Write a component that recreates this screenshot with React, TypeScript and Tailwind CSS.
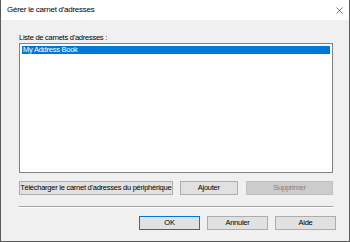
import { X } from 'lucide-react'

const font = { fontFamily: '"Liberation Sans", Arial, sans-serif' }

function Btn({ label, w, disabled, focused }: { label: string; w: string; disabled?: boolean; focused?: boolean }) {
  return (
    <div
      className={`${w} h-[14px] box-border flex items-center justify-center whitespace-nowrap text-[7.5px] tracking-[-0.25px] leading-none border ${
        disabled
          ? 'bg-[#cccccc] border-[#bfbfbf] text-[#838383]'
          : focused
            ? 'bg-[#e1e1e1] border-[#0078d7] text-black'
            : 'bg-[#e1e1e1] border-[#adadad] text-black'
      }`}
    >
      {label}
    </div>
  )
}

export default function App() {
  return (
    <div className="w-[350px] h-[242px] box-border flex flex-col bg-[#f0f0f0] border border-t-0 border-[#5a5a5a] overflow-hidden" style={font}>
      <div className="h-[20px] bg-white flex items-center justify-between pl-[6px] pr-[4px]">
        <span className="text-[8px] tracking-[-0.25px] text-black">Gérer le carnet d'adresses</span>
        <X className="w-[11px] h-[11px] text-[#222]" strokeWidth={1.3} />
      </div>
      <div className="flex flex-col pl-[18px] pr-[16px] pt-[12px]">
        <div className="text-[7.5px] tracking-[-0.25px] leading-[11px] text-black whitespace-nowrap">Liste de carnets d'adresses :</div>
        <div className="w-[314px] h-[130px] bg-white border border-[#828282] p-[2px] box-border">
          <div className="h-[8px] bg-[#0078d7] text-white text-[7.5px] tracking-[-0.25px] leading-[8px] pl-[1px] whitespace-nowrap">My Address Book</div>
        </div>
        <div className="mt-[8px] flex gap-[7px]">
          <Btn label="Télécharger le carnet d'adresses du périphérique" w="w-[155px]" />
          <Btn label="Ajouter" w="w-[59px]" />
          <div className="ml-[1px]">
            <Btn label="Supprimer" w="w-[87px]" disabled />
          </div>
        </div>
        <div className="mt-[11px] w-[314px] h-[2px] border-t border-[#a0a0a0] border-b border-b-white box-border" />
        <div className="mt-[8px] flex justify-end gap-[7px] -mr-[3px]">
          <Btn label="OK" w="w-[61px]" focused />
          <Btn label="Annuler" w="w-[61px]" />
          <Btn label="Aide" w="w-[61px]" />
        </div>
      </div>
    </div>
  )
}
